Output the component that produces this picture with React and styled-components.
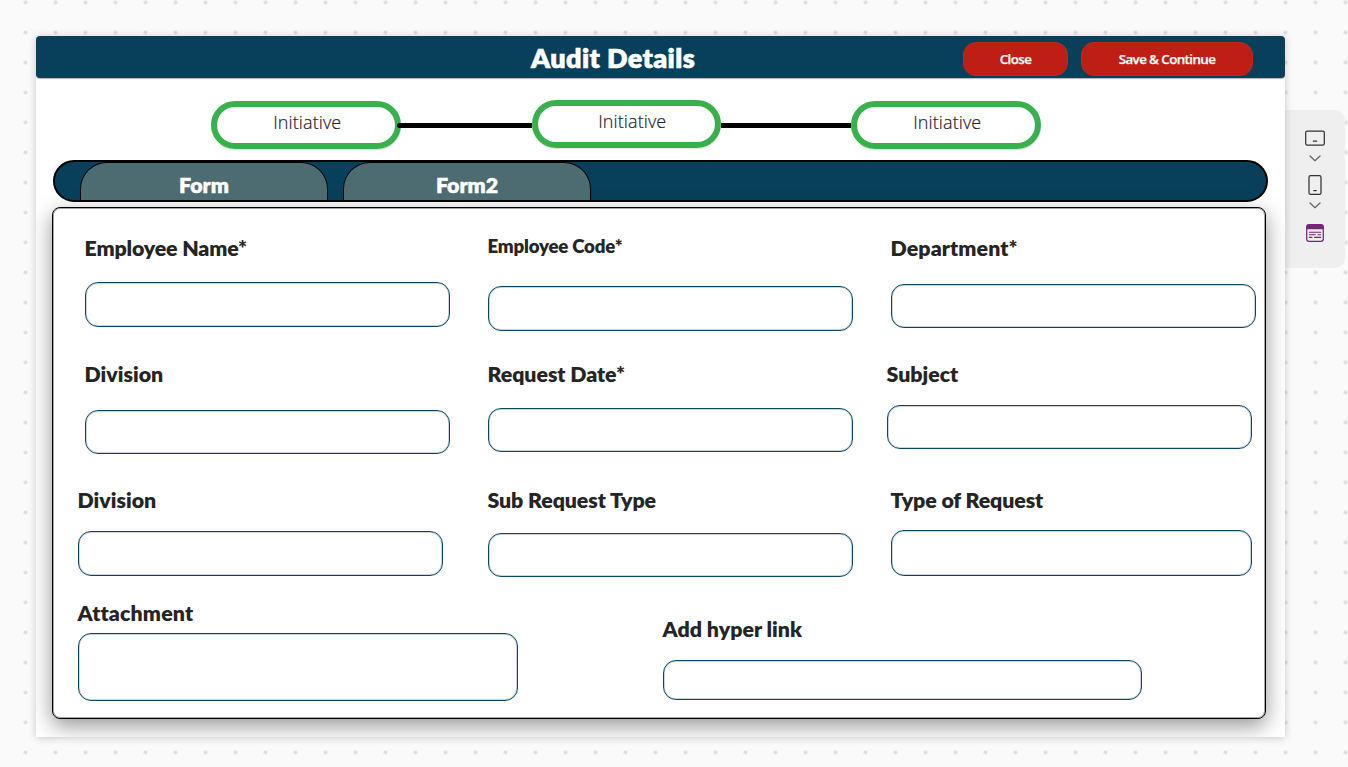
import React from "react";
import styled, { createGlobalStyle } from "styled-components";

const GlobalStyle = createGlobalStyle`
  *, *::before, *::after { box-sizing: border-box; }
  html, body { margin: 0; padding: 0; overflow: hidden; }
`;

const colors = {
  navy: "#08405b",
  inputLine: "#0b4563",
  teal: "#4d6c71",
  green: "#38b14c",
  red: "#bf1e14",
  ink: "#252525",
  purple: "#742774",
};

const Canvas = styled.div`
  display: flex;
  align-items: flex-start;
  width: 1348px;
  height: 767px;
  padding: 36px 0 0 36px;
  background-color: #fafafa;
  background-image: radial-gradient(circle, #dcdcdc 1.4px, rgba(220, 220, 220, 0) 2.4px);
  background-size: 30px 30px;
  background-position: 10.5px 17.5px;
  font-family: Lato, "Open Sans", sans-serif;
  font-variant-ligatures: none;
`;

const Screen = styled.main`
  flex: none;
  width: 1249px;
  height: 701px;
  background: #fff;
  box-shadow: 0 1px 8px rgba(0, 0, 0, 0.2);
  overflow: hidden;
  position: relative;
`;

const Header = styled.header`
  display: flex;
  align-items: center;
  height: 42px;
  padding: 3px 32px 0 227px;
  border-radius: 4px;
  background: ${colors.navy};
  box-shadow: 0 1px 1px rgba(0, 0, 0, 0.3);
`;

const Title = styled.h1`
  flex: 1;
  margin: -2px 0 0;
  text-align: center;
  color: #fff;
  font-size: 27px;
  font-weight: 800;
  letter-spacing: 0.4px;
  line-height: 32px;
  -webkit-text-stroke: 0.6px #fff;
`;

const Button = styled.button`
  width: ${(p) => p.$width}px;
  height: 34px;
  margin-left: ${(p) => p.$gap || 0}px;
  padding: 0;
  border: 1px solid #c0281f;
  border-radius: 13px;
  background: ${colors.red};
  color: #fff;
  font: 600 13.33px/20px "Open Sans", sans-serif;
  letter-spacing: -0.58px;
  -webkit-text-stroke: 0.25px #fff;
`;

const Steps = styled.div`
  display: flex;
  height: 82px;
  padding: 22px 0 0 175px;
`;

const Step = styled.div`
  width: 189.5px;
  height: 48px;
  margin-top: ${(p) => p.$top}px;
  padding: 3px 0 0 ${(p) => p.$shift}px;
  border: 6px solid ${colors.green};
  border-radius: 24px;
  box-shadow: 0 1px 1px rgba(0, 0, 0, 0.12);
  text-align: center;
  color: ${colors.ink};
  font: 300 18px/24px "Open Sans", sans-serif;
  letter-spacing: 0.1px;
  -webkit-text-stroke: 0.2px ${colors.ink};
`;

const Connector = styled.div`
  z-index: 1;
  width: ${(p) => p.$width}px;
  height: 5px;
  margin: 23px 0 0 ${(p) => p.$overlap}px;
  border-radius: ${(p) => (p.$overlap ? "3px 0 0 3px" : "0")};
  background: #000;
`;

const TabBar = styled.nav`
  display: flex;
  gap: 15px;
  width: 1215px;
  height: 42px;
  margin-left: 17px;
  padding-left: 25px;
  border: 2px solid #000;
  border-radius: 22px;
  background: ${colors.navy};
`;

const Tab = styled.div`
  width: 248px;
  padding-top: 9px;
  border: 1px solid #000;
  border-bottom: 0;
  border-radius: 27px 27px 0 0;
  background: ${colors.teal};
  color: #fff;
  text-align: center;
  font-size: 21.33px;
  font-weight: 800;
  line-height: 26px;
  -webkit-text-stroke: 0.4px #fff;
`;

const Panel = styled.form`
  width: 1214px;
  height: 512px;
  margin: 5px 0 0 16px;
  padding: 27px 0 0 32px;
  border: 1px solid #000;
  border-radius: 8px;
  background: #fff;
  box-shadow: inset 0 0 0 1px rgba(0, 0, 0, 0.35), 0 7px 21px rgba(0, 0, 0, 0.42);
`;

const Row = styled.div`
  display: grid;
  grid-template-columns: ${(p) => p.$columns || "403px 403px 365px"};
  height: ${(p) => p.$height}px;
`;

const FieldBox = styled.label`
  display: flex;
  flex-direction: column;
  width: ${(p) => p.$width}px;
  margin: ${(p) => p.$top}px 0 0 ${(p) => p.$shift}px;
`;

const Caption = styled.span`
  height: 26px;
  margin-left: -0.5px;
  color: ${colors.ink};
  font-size: ${(p) => (p.$small ? 18.67 : 21.33)}px;
  font-weight: 800;
  letter-spacing: ${(p) => p.$spacing}px;
  line-height: ${(p) => (p.$small ? 22 : 26)}px;
  white-space: nowrap;
`;

const Input = styled.input`
  width: 100%;
  height: ${(p) => p.$height}px;
  margin: ${(p) => p.$gap}px 0 0;
  padding: 0 12px;
  border: 1px solid ${colors.inputLine};
  border-radius: 13px;
  box-shadow: inset 0 0 0 1px rgba(11, 69, 99, 0.22);
  outline: 0;
  background: #fff;
`;

function Field({ label, gap, small, spacing = 0, width = 365, height = 45, top = 0, shift = 0 }) {
  return (
    <FieldBox $width={width} $top={top} $shift={shift}>
      <Caption $small={small} $spacing={spacing}>{label}</Caption>
      <Input $gap={gap} $height={height} />
    </FieldBox>
  );
}

const Rail = styled.aside`
  display: flex;
  flex-direction: column;
  align-items: center;
  width: 60px;
  height: 158px;
  margin-top: 74px;
  padding-top: 18px;
  border-radius: 0 10px 10px 0;
  background: #efefef;
`;

const Icon = styled.svg`
  display: block;
  flex: none;
  margin-top: ${(p) => p.$top || 0}px;
  fill: none;
  stroke: ${(p) => p.$color || "#333"};
  stroke-width: 1.25;
  stroke-linecap: round;
  stroke-linejoin: round;
`;

const Chevron = ({ top }) => (
  <Icon width="12" height="7" viewBox="0 0 12 7" $top={top} $color="#666">
    <path d="M1 1l5 4.7L11 1" />
  </Icon>
);

export default function App() {
  return (
    <>
      <GlobalStyle />
      <Canvas>
        <Screen>
          <Header>
            <Title>Audit Details</Title>
            <Button $width={105}>Close</Button>
            <Button $width={172} $gap={13}>Save &amp; Continue</Button>
          </Header>
          <Steps>
            <Step $top={1} $shift={3}>Initiative</Step>
            <Connector $width={135} $overlap={-4} />
            <Step $top={0} $shift={12}>Initiative</Step>
            <Connector $width={130} $overlap={0} />
            <Step $top={1} $shift={3}>Initiative</Step>
          </Steps>
          <TabBar>
            <Tab>Form</Tab>
            <Tab>Form2</Tab>
          </TabBar>
          <Panel>
            <Row $height={126}>
              <Field label="Employee Name*" gap={21} spacing={-0.15} />
              <Field label="Employee Code*" gap={25} spacing={-0.2} small />
              <Field label="Department*" gap={23} height={44} spacing={0.1} />
            </Row>
            <Row $height={126}>
              <Field label="Division" gap={23} height={44} />
              <Field label="Request Date*" gap={21} height={44} spacing={-0.06} />
              <Field label="Subject" gap={18} height={44} shift={-4} />
            </Row>
            <Row $height={113}>
              <Field label="Division" gap={18} shift={-7} />
              <Field label="Sub Request Type" gap={20} height={44} spacing={-0.1} />
              <Field label="Type of Request" gap={17} height={46} width={361} spacing={-0.1} />
            </Row>
            <Row $height={110} $columns="578px 480px">
              <Field label="Attachment" gap={7} width={439.5} height={68} shift={-7} spacing={0.15} />
              <Field label="Add hyper link" gap={18} width={479} height={40} top={16} />
            </Row>
          </Panel>
        </Screen>
        <Rail>
          <Icon width="20" height="20" viewBox="0 0 20 20">
            <rect x="0.7" y="3" width="18.6" height="14.2" rx="1.6" />
            <path d="M8.4 13.2h3.2" />
          </Icon>
          <Chevron top={7} />
          <Icon width="20" height="20" viewBox="0 0 20 20" $top={13}>
            <rect x="4" y="0.7" width="12" height="18.6" rx="1.6" />
            <path d="M8.8 15.6h2.4" />
          </Icon>
          <Chevron top={7} />
          <Icon width="18" height="18" viewBox="0 0 18 18" $top={15} $color={colors.purple}>
            <rect x="0.7" y="0.7" width="16.6" height="16.6" rx="2.4" />
            <path d="M1 4.5V3a2 2 0 0 1 2-2h12a2 2 0 0 1 2 2v1.500z" fill={colors.purple} />
            <path d="M3.300 8.200h11.400M3.300 10.800h6M12 10.800h2.700M3.300 13.400h2.600M8.600 13.400h6.100" strokeWidth="1.100" />
          </Icon>
        </Rail>
      </Canvas>
    </>
  );
}
